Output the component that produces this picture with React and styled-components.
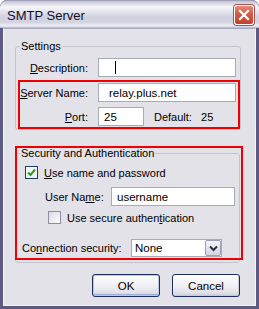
import React from 'react'
import styled, { createGlobalStyle } from 'styled-components'

const Global = createGlobalStyle`
  html, body { margin: 0; padding: 0; background: #fff; }
  body { font-family: "Liberation Sans", Arial, sans-serif; font-size: 11px; color: #000; }
`

const Window = styled.div`
  width: 259px;
  height: 309px;
  box-sizing: border-box;
  display: flex;
  flex-direction: column;
  background: #5c5a80;
  padding: 0 3px 3px 3px;
  border-radius: 7px 7px 0 0;
  overflow: hidden;
`

const TitleBar = styled.div`
  height: 28px;
  margin: 0 -3px;
  padding: 0 5px 0 7px;
  box-sizing: border-box;
  display: flex;
  align-items: center;
  justify-content: space-between;
  border-radius: 7px 7px 0 0;
  border-top: 1px solid #a0a0b8;
  background: linear-gradient(
    to bottom,
    #c4c4d4 0%,
    #f6f6fa 22%,
    #e4e4ee 40%,
    #cfcfde 62%,
    #d6d6e2 80%,
    #f0f0f6 92%,
    #b4b4c6 100%
  );
`

const Title = styled.span`
  font-size: 13px;
  color: #0e1030;
  padding-top: 1px;
`

const CloseButton = styled.div`
  width: 20px;
  height: 20px;
  box-sizing: border-box;
  border-radius: 3px;
  border: 1px solid #ffffff;
  box-shadow: 0 0 0 1px #a84f4f;
  background: linear-gradient(to bottom, #e88a78 0%, #d45a45 45%, #c2412e 100%);
  display: flex;
  align-items: center;
  justify-content: center;
`

const Body = styled.div`
  flex: 1;
  background: #e3e2e8;
  border: 1px solid #f4f4f8;
  border-top-color: #a8a8bc;
  padding: 11px 14px 0 11px;
  display: flex;
  flex-direction: column;
`

const Group = styled.fieldset`
  margin: 0;
  padding: 0 4px ${p => (p.$loose ? 5 : 3)}px ${p => (p.$loose ? 6 : 4)}px;
  border: 1px solid #c4c3cc;
  border-radius: 3px;
  min-width: 0;
  ${p => p.$loose && 'margin-right: 1px;'}
`

const Legend = styled.legend`
  padding: 0 1px;
  margin-left: ${p => p.$shift || 0}px;
  line-height: 13px;
`

const FormRow = styled.div`
  display: grid;
  grid-template-columns: ${p => p.$cols || '68px 1fr'};
  column-gap: ${p => p.$gap || 10}px;
  align-items: center;
  margin-top: ${p => p.$top ?? 5}px;
  padding-left: ${p => p.$indent || 0}px;
`

const Label = styled.span`
  text-align: ${p => (p.$left ? 'left' : 'right')};
  white-space: nowrap;
`

const Input = styled.div`
  height: 19px;
  box-sizing: border-box;
  background: #fff;
  border: 1px solid #a5acb5;
  padding: 0 0 0 ${p => p.$pad || 6}px;
  display: flex;
  align-items: center;
  font-size: 11.5px;
  width: ${p => p.$w || 'auto'};
`

const Caret = styled.span`
  width: 1px;
  height: 13px;
  background: #000;
`

const Marked = styled.div`
  position: relative;
  margin-top: 6px;
  &::after {
    content: '';
    position: absolute;
    top: -3px;
    bottom: -3px;
    left: -2px;
    right: -4px;
    border: 2px solid #f00000;
    pointer-events: none;
  }
`

const MarkedGroup = styled.div`
  position: relative;
  margin-top: 17px;
  &::after {
    content: '';
    position: absolute;
    top: -1px;
    bottom: 3px;
    left: 0;
    right: -2px;
    border: 2px solid #f00000;
    pointer-events: none;
  }
`

const Inline = styled.div`
  display: flex;
  align-items: center;
  gap: 10px;
`

const CheckRow = styled.label`
  display: flex;
  align-items: center;
  gap: 6px;
  margin-top: ${p => p.$top || 0}px;
  padding-left: ${p => p.$indent || 0}px;
`

const Box = styled.span`
  width: 13px;
  height: 13px;
  box-sizing: border-box;
  border: 1px solid ${p => (p.$checked ? '#1c3a70' : '#8e8fa6')};
  background: ${p =>
    p.$checked ? '#f4f4f4' : 'linear-gradient(135deg, #d8d8e0 0%, #f0f0f4 60%, #ffffff 100%)'};
  display: flex;
  align-items: center;
  justify-content: center;
`

const Select = styled.div`
  width: 91px;
  height: 18px;
  box-sizing: border-box;
  background: #fff;
  border: 1px solid #a5acb5;
  display: flex;
  align-items: stretch;
`

const SelectValue = styled.span`
  flex: 1;
  padding-left: 3px;
  display: flex;
  align-items: center;
  font-size: 11.5px;
`

const DropButton = styled.span`
  width: 16px;
  box-sizing: border-box;
  border: 1px solid #a0a0b4;
  border-radius: 2px;
  background: linear-gradient(to bottom, #f4f4f8, #d4d4de);
  display: flex;
  align-items: center;
  justify-content: center;
`

const ButtonBar = styled.div`
  display: flex;
  justify-content: flex-end;
  gap: 12px;
  margin-top: 11px;
  padding-right: 1px;
`

const Button = styled.div`
  width: 68px;
  height: 23px;
  box-sizing: border-box;
  border: 1px solid #1b2e60;
  border-radius: 3px;
  background: linear-gradient(to bottom, #ffffff 0%, #f0f0f4 50%, #e0e0e8 85%, #cacad6 100%);
  box-shadow: ${p => (p.$default ? 'inset 0 0 0 1px #b8c8e8, inset 0 -1px 0 1px #9eb0d8' : 'inset -1px -1px 0 #c8c8d4')};
  display: flex;
  align-items: center;
  justify-content: center;
  font-size: 11.5px;
`

const U = styled.u`
  text-decoration: underline;
  text-underline-offset: 1px;
`

const App = () => {
  return (
    <>
      <Global />
      <Window>
        <TitleBar>
          <Title>SMTP Server</Title>
          <CloseButton>
            <svg width="12" height="12" viewBox="0 0 12 12">
              <path d="M2 2 L10 10 M10 2 L2 10" stroke="#fff" strokeWidth="2.2" strokeLinecap="square" />
            </svg>
          </CloseButton>
        </TitleBar>
        <Body>
          <Group>
            <Legend>Settings</Legend>
            <FormRow $top={5}>
              <Label><U>D</U>escription:</Label>
              <Input $pad={16}><Caret /></Input>
            </FormRow>
            <Marked>
              <FormRow $top={0}>
                <Label><U>S</U>erver Name:</Label>
                <Input $pad={10}>relay.plus.net</Input>
              </FormRow>
              <FormRow>
                <Label><U>P</U>ort:</Label>
                <Inline>
                  <Input $w="46px" $pad={5}>25</Input>
                  <span>Default:&nbsp;&nbsp;&nbsp;25</span>
                </Inline>
              </FormRow>
            </Marked>
          </Group>
          <MarkedGroup>
            <Group $loose>
              <Legend $shift={-2}>Security and Authentication</Legend>
              <CheckRow $top={6} $indent={3}>
                <Box $checked>
                  <svg width="9" height="9" viewBox="0 0 9 9">
                    <path d="M1 4.5 L3.5 7 L8 1.5" fill="none" stroke="#21a121" strokeWidth="2" />
                  </svg>
                </Box>
                <span><U>U</U>se name and password</span>
              </CheckRow>
              <FormRow $cols="56px 1fr" $top={8} $indent={23}>
                <Label $left>User Na<U>m</U>e:</Label>
                <Input $pad={5}>username</Input>
              </FormRow>
              <CheckRow $top={5} $indent={26}>
                <Box />
                <span>Use secure authen<U>t</U>ication</span>
              </CheckRow>
              <FormRow $cols="100px 91px" $gap={9} $top={15}>
                <Label $left>Co<U>n</U>nection security:</Label>
                <Select>
                  <SelectValue>None</SelectValue>
                  <DropButton>
                    <svg width="9" height="7" viewBox="0 0 9 7">
                      <path d="M1 1.5 L4.5 5 L8 1.5" fill="none" stroke="#2a2a4a" strokeWidth="2" />
                    </svg>
                  </DropButton>
                </Select>
              </FormRow>
            </Group>
          </MarkedGroup>
          <ButtonBar>
            <Button $default>OK</Button>
            <Button>Cancel</Button>
          </ButtonBar>
        </Body>
      </Window>
    </>
  )
}

export default App
